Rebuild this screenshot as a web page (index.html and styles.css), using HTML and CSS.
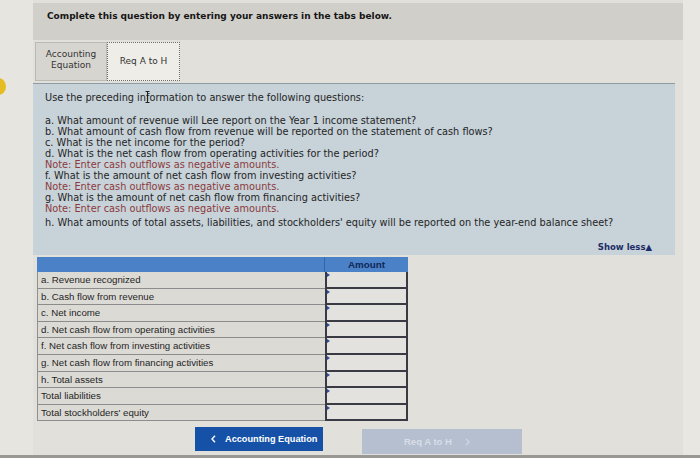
FILE: index.html
```html
<!DOCTYPE html>
<html>
<head>
<meta charset="utf-8">
<link rel="stylesheet" href="styles.css">
</head>
<body>
<div class="edge-dot"></div>
<div class="page">
  <div class="header">Complete this question by entering your answers in the tabs below.</div>
  <div class="tabs">
    <div class="tab tab-inactive">Accounting<br>Equation</div>
    <div class="tab tab-active">Req A to H</div>
  </div>
  <div class="panel">
    <div class="intro">Use the preceding in<span class="cursor-host">f<svg class="ibeam" width="5" height="12" viewBox="0 0 5 12"><path d="M0.5 0.5 H4.5 M2.5 0.5 V11.5 M0.5 11.5 H4.5" stroke="#222" stroke-width="1" fill="none"/></svg></span>ormation to answer the following questions:</div>
    <div class="questions">
      <div class="q">a. What amount of revenue will Lee report on the Year 1 income statement?</div>
      <div class="q">b. What amount of cash flow from revenue will be reported on the statement of cash flows?</div>
      <div class="q">c. What is the net income for the period?</div>
      <div class="q">d. What is the net cash flow from operating activities for the period?</div>
      <div class="q note">Note: Enter cash outflows as negative amounts.</div>
      <div class="q">f. What is the amount of net cash flow from investing activities?</div>
      <div class="q note">Note: Enter cash outflows as negative amounts.</div>
      <div class="q">g. What is the amount of net cash flow from financing activities?</div>
      <div class="q note">Note: Enter cash outflows as negative amounts.</div>
      <div class="q q-last">h. What amounts of total assets, liabilities, and stockholders' equity will be reported on the year-end balance sheet?</div>
    </div>
    <div class="show-less">Show less&#9650;</div>
  </div>
  <div class="answer-table">
    <div class="th th-label"></div>
    <div class="th th-amount">Amount</div>
    <div class="td-label">a. Revenue recognized</div><div class="td-amount"></div>
    <div class="td-label">b. Cash flow from revenue</div><div class="td-amount"></div>
    <div class="td-label">c. Net income</div><div class="td-amount"></div>
    <div class="td-label">d. Net cash flow from operating activities</div><div class="td-amount"></div>
    <div class="td-label">f. Net cash flow from investing activities</div><div class="td-amount"></div>
    <div class="td-label">g. Net cash flow from financing activities</div><div class="td-amount"></div>
    <div class="td-label">h. Total assets</div><div class="td-amount"></div>
    <div class="td-label">Total liabilities</div><div class="td-amount"></div>
    <div class="td-label">Total stockholders' equity</div><div class="td-amount"></div>
  </div>
  <div class="nav">
    <div class="btn btn-prev">
      <svg width="5" height="8" viewBox="0 0 5 8"><path d="M4 0.8 L1 4 L4 7.2" stroke="#fff" stroke-width="1.4" fill="none"/></svg>
      <span>Accounting Equation</span>
    </div>
    <div class="btn btn-next">
      <span>Req A to H</span>
      <svg width="5" height="8" viewBox="0 0 5 8"><path d="M1 0.8 L4 4 L1 7.2" stroke="#d3d9e3" stroke-width="1.2" fill="none"/></svg>
    </div>
  </div>
</div>
<div class="bottom-strip"></div>
</body>
</html>
```
FILE: styles.css
```css
html, body {
  margin: 0;
  padding: 0;
}
body {
  width: 700px;
  height: 458px;
  overflow: hidden;
  background: linear-gradient(90deg, #e6e5e0 0px, #e6e5e0 33px, #e2e0da 33px, #e2e0da 683px, #e9e7e2 683px);
  position: relative;
  font-family: "DejaVu Sans", Verdana, sans-serif;
  color: #222;
}
.edge-dot {
  position: absolute;
  left: -9px;
  top: 78px;
  width: 15px;
  height: 17px;
  border-radius: 50%;
  background: #e5bd22;
}
.page {
  padding-left: 33px;
  padding-top: 3px;
  height: 455px;
  box-sizing: border-box;
}
.header {
  width: 650px;
  height: 37px;
  box-sizing: border-box;
  background: #d1cfca;
  padding: 8px 0 0 14px;
  font-weight: bold;
  font-size: 9px;
  line-height: 10px;
  color: #151515;
}
.tabs {
  display: flex;
  margin-top: 2px;
  height: 39px;
  padding-left: 2px;
}
.tab {
  box-sizing: border-box;
  height: 39px;
  font-size: 9px;
  line-height: 11px;
  color: #333;
  text-align: center;
}
.tab-inactive {
  width: 72px;
  background: #d7d5d0;
  border: 1px solid #bcbab5;
  padding-top: 6px;
}
.tab-active {
  width: 73px;
  background: #eeede8;
  border: 1px dotted #6f6f6f;
  display: flex;
  align-items: center;
  justify-content: center;
}
.panel {
  margin-top: 2px;
  width: 642px;
  box-sizing: border-box;
  background: #c7d2d9;
  border-top: 1px solid #8e9ba3;
  padding: 8px 23px 3px 12px;
  font-size: 9.75px;
  line-height: 11px;
  color: #252525;
}
.cursor-host {
  position: relative;
}
.ibeam {
  position: absolute;
  left: -1px;
  top: -1px;
}
.questions {
  margin-top: 12px;
}
.note {
  color: #8c3a3c;
}
.q-last {
  margin-top: 3px;
}
.show-less {
  margin-top: 14px;
  text-align: right;
  font-weight: bold;
  font-size: 8.5px;
  line-height: 10px;
  color: #1d2c66;
}
.answer-table {
  margin-top: 2px;
  margin-left: 4px;
  display: grid;
  grid-template-columns: 288px 83px;
  grid-auto-rows: 16.6px;
  grid-template-rows: 15px;
  width: 371px;
  font-family: "Liberation Sans", Arial, sans-serif;
}
.th {
  background: #4b81c7;
  height: 15px;
}
.th-label {
  border-right: 1px solid #3465a6;
}
.th-amount {
  font-weight: bold;
  font-size: 9.8px;
  line-height: 15px;
  text-align: center;
  color: #10295a;
}
.td-label {
  box-sizing: border-box;
  background: #dcdad5;
  border-left: 1px solid #8f8f8f;
  border-bottom: 1px solid #8c8c8c;
  padding-left: 3px;
  font-size: 9.7px;
  line-height: 15.6px;
  color: #1f1f1f;
}
.td-amount {
  position: relative;
  box-sizing: border-box;
  background: #e3e2de;
  border-left: 2px solid #3a3a44;
  border-right: 2px solid #3a3a44;
  border-bottom: 2px solid #3a3a44;
}
.td-amount::before {
  content: "";
  position: absolute;
  left: 0;
  top: 1px;
  border-top: 2px solid transparent;
  border-bottom: 2px solid transparent;
  border-left: 3px solid #2b4a9a;
}
.nav {
  display: flex;
  align-items: flex-start;
  margin-top: 6px;
  padding-left: 162px;
  height: 27px;
}
.btn {
  box-sizing: border-box;
  display: flex;
  align-items: center;
  font-family: "Liberation Sans", Arial, sans-serif;
  font-weight: bold;
}
.btn-prev {
  width: 128px;
  height: 24px;
  background: #1551a6;
  color: #fff;
  padding-left: 16px;
  gap: 9px;
  font-size: 9.2px;
}
.btn-next {
  margin-left: 39px;
  margin-top: 2px;
  width: 160px;
  height: 25px;
  background: #b5bfcf;
  color: #d8dee8;
  padding-left: 42px;
  gap: 13px;
  font-size: 9.5px;
}
.bottom-strip {
  height: 3px;
  background: #9a9894;
}
```
